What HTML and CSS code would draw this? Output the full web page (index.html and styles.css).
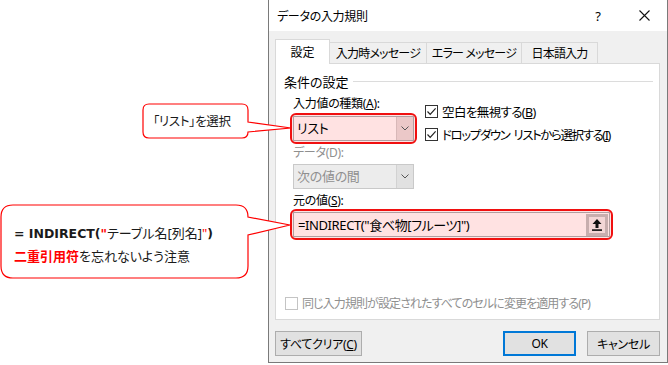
FILE: index.html
```html
<!DOCTYPE html>
<html lang="ja">
<head>
    <meta charset="UTF-8">
    <title>データの入力規則</title>
    <link rel="stylesheet" href="styles.css">
</head>
<body>
<div class="page">
    <div class="canvas"></div>

    <div class="dialog">
        <div class="titlebar">
            <span class="title">データの入力規則</span>
            <span class="tb-btn">?</span>
            <span class="tb-btn">
                <svg width="11" height="11" viewBox="0 0 11 11"><path d="M0.5 0.5 L10.5 10.5 M10.5 0.5 L0.5 10.5" stroke="#111" stroke-width="1.1" fill="none"/></svg>
            </span>
        </div>

        <div class="dlg-body">
            <div class="tabs">
                <div class="tab active" style="width:55px">設定</div>
                <div class="tab" style="width:97px">入力時メッセージ</div>
                <div class="tab" style="width:95px">エラー メッセージ</div>
                <div class="tab" style="width:76px">日本語入力</div>
            </div>

            <div class="panel">
                <div class="legend">
                    <span>条件の設定</span>
                    <span class="legend-line"></span>
                </div>

                <div class="settings">
                    <div class="col-left">
                        <div class="label">入力値の種類(<u>A</u>):</div>
                        <div class="mark">
                            <div class="combo pink">
                                <span class="combo-text">リスト</span>
                                <span class="combo-btn"><svg width="8" height="5" viewBox="0 0 8 5"><path d="M0.5 0.5 L4 4 L7.5 0.5" stroke="#555" fill="none"/></svg></span>
                            </div>
                        </div>
                        <div class="label disabled">データ(D):</div>
                        <div class="combo off">
                            <span class="combo-text">次の値の間</span>
                            <span class="combo-btn"><svg width="8" height="5" viewBox="0 0 8 5"><path d="M0.5 0.5 L4 4 L7.5 0.5" stroke="#555" fill="none"/></svg></span>
                        </div>
                    </div>
                    <div class="col-right">
                        <label class="check first">
                            <span class="box"><svg width="11" height="11" viewBox="0 0 11 11"><path d="M1.5 5.5 L4.2 8.3 L9.6 2.4" stroke="#222" stroke-width="1.2" fill="none"/></svg></span>
                            <span>空白を無視する(<u>B</u>)</span>
                        </label>
                        <label class="check narrow">
                            <span class="box"><svg width="11" height="11" viewBox="0 0 11 11"><path d="M1.5 5.5 L4.2 8.3 L9.6 2.4" stroke="#222" stroke-width="1.2" fill="none"/></svg></span>
                            <span><span class="word">ドロップダウン</span>リストから選択する(<u>I</u>)</span>
                        </label>
                    </div>
                </div>

                <div class="label src-label">元の値(<u>S</u>):</div>
                <div class="mark wide">
                    <div class="textbox">
                        <span class="tb-text">=INDIRECT("食べ物[フルーツ]")</span>
                        <span class="pick">
                            <svg width="10" height="12" viewBox="0 0 10 12"><path d="M5 0 L9.5 5 H6.5 V9 H3.5 V5 H0.5 Z" fill="#111"/><rect x="0" y="10.3" width="10" height="1.6" fill="#111"/></svg>
                        </span>
                    </div>
                </div>

                <label class="check apply">
                    <span class="box off"></span>
                    <span>同じ入力規則が設定されたすべてのセルに変更を適用する(P)</span>
                </label>
            </div>

            <div class="buttons">
                <button class="btn clear">すべてクリア(<u>C</u>)</button>
                <span class="spacer"></span>
                <button class="btn primary">OK</button>
                <button class="btn">キャンセル</button>
            </div>
        </div>
    </div>

    <!-- annotation balloons lie over the page -->
    <svg class="callouts" width="668" height="365" viewBox="0 0 668 365">
        <path d="M149,104 H242 Q248,104 248,110 V122 L291,128 L248,132 Q248,138 242,138 H149 Q143,138 143,132 V110 Q143,104 149,104 Z" fill="#fff" stroke="#f00" stroke-width="1.2"/>
        <path d="M13,205 H236 Q248,205 248,217 L290,225 L248,235 V266 Q248,278 236,278 H13 Q1,278 1,266 V217 Q1,205 13,205 Z" fill="#fff" stroke="#f00" stroke-width="1.2"/>
    </svg>
    <div class="note note-list">「リスト」を選択</div>
    <div class="note note-formula">
        <div class="formula"><b>= INDIRECT(</b><b class="red">"</b>テーブル名[列名]<span class="red">"</span><b>)</b></div>
        <div class="warn"><b class="red">二重引用符</b>を忘れないよう注意</div>
    </div>
</div>
</body>
</html>
```

FILE: styles.css
```css
body {
    margin: 0;
    background-color: #fff;
    font-family: "Noto Sans", "Noto Sans CJK JP", sans-serif;
    font-feature-settings: "palt" 1;
    color: #000;
    overflow: hidden;
}

.page {
    position: relative;
    display: flex;
    width: 668px;
    height: 365px;
}

.canvas {
    width: 268px;
    flex: none;
}

.dialog {
    width: 398px;
    height: 362px;
    border: 1px solid #7a7a7a;
    border-top: none;
    background-color: #f0f0f0;
    display: flex;
    flex-direction: column;
    font-size: 12px;
    letter-spacing: -0.3px;
}

.titlebar {
    height: 31px;
    background-color: #fff;
    display: flex;
    align-items: center;
    padding-left: 8px;
}

.title {
    flex: 1;
}

.tb-btn {
    width: 46px;
    height: 31px;
    display: flex;
    align-items: center;
    justify-content: center;
    font-size: 13px;
}

.dlg-body {
    flex: 1;
    display: flex;
    flex-direction: column;
    padding: 8px 7px 0 6px;
}

.tabs {
    display: flex;
    align-items: flex-end;
    height: 24px;
    position: relative;
    z-index: 1;
    letter-spacing: -0.8px;
}

.tab {
    box-sizing: border-box;
    height: 21px;
    border: 1px solid #d9d9d9;
    border-left: none;
    border-bottom: none;
    background-color: #f0f0f0;
    display: flex;
    align-items: center;
    justify-content: center;
}

.tab.active {
    height: 25px;
    border-left: 1px solid #d9d9d9;
    background-color: #fff;
    margin-bottom: -1px;
    letter-spacing: 0;
}

.panel {
    box-sizing: border-box;
    width: 385px;
    height: 257px;
    background-color: #fff;
    border: 1px solid #d9d9d9;
    display: flex;
    flex-direction: column;
    padding: 9px 6px 8px 0;
}

.legend {
    display: flex;
    align-items: center;
    height: 16px;
    padding-left: 8px;
    font-size: 13px;
    letter-spacing: 0;
}

.legend-line {
    flex: 1;
    height: 1px;
    background-color: #dcdcdc;
    margin-left: 4px;
    margin-top: 1px;
}

.label {
    height: 16px;
    line-height: 16px;
    padding-left: 17px;
}

.label.disabled {
    color: #8f8f8f;
}

.settings {
    display: grid;
    grid-template-columns: 141px 1fr;
    column-gap: 8px;
    margin-top: 7px;
}

.mark {
    margin: 1px 0 0 14px;
    border: 2px solid #f01010;
    border-radius: 6px;
    padding: 1px;
    background-color: #fde4e4;
    width: 121px;
}

.mark.wide {
    width: 317px;
    margin-top: 0;
}

.combo {
    box-sizing: border-box;
    height: 25px;
    display: flex;
    border: 1px solid #b09ea0;
    background-color: #ffe2e2;
}

.combo-text {
    flex: 1;
    padding-left: 3px;
    line-height: 23px;
    font-size: 13px;
}

.combo-btn {
    width: 16px;
    border-left: 1px solid #d8b8b8;
    background-color: #ebc8c8;
    display: flex;
    align-items: center;
    justify-content: center;
}

.combo.off {
    width: 121px;
    margin: 3px 0 0 17px;
    border-color: #c9c9c9;
    background-color: #ececec;
}

.combo.off .combo-text {
    color: #8f8f8f;
}

.combo.off .combo-btn {
    border-left-color: #d2d2d2;
    background-color: #e1e1e1;
}

.col-left .label.disabled {
    margin-top: 1px;
}

.col-right {
    padding-top: 7px;
}

.check {
    display: flex;
    align-items: center;
    height: 16px;
    gap: 4px;
    font-size: 12.5px;
    letter-spacing: -0.6px;
}

.check.first {
    margin-bottom: 7px;
}

.check.narrow {
    letter-spacing: -1.4px;
}

.word {
    margin-right: 4px;
}

.box {
    box-sizing: border-box;
    flex: none;
    width: 13px;
    height: 13px;
    border: 1px solid #333;
    background-color: #fff;
    display: flex;
    align-items: center;
    justify-content: center;
}

.box.off {
    border-color: #c4c4c4;
}

.src-label {
    margin-top: 4px;
}

.textbox {
    box-sizing: border-box;
    height: 25px;
    display: flex;
    align-items: center;
    border: 1px solid #b09ea0;
    background-color: #ffe2e2;
    padding-right: 1px;
}

.tb-text {
    flex: 1;
    padding-left: 4px;
    font-size: 13px;
    letter-spacing: -0.4px;
}

.pick {
    box-sizing: border-box;
    width: 22px;
    height: 22px;
    border: 3px solid #c8aeae;
    background-color: #f3d6d6;
    display: flex;
    align-items: center;
    justify-content: center;
}

.check.apply {
    margin-top: auto;
    padding-left: 9px;
    color: #8f8f8f;
    font-size: 12px;
    letter-spacing: -0.9px;
}

.buttons {
    display: flex;
    gap: 11px;
    margin-top: 11px;
}

.spacer {
    flex: 1;
}

.btn {
    box-sizing: border-box;
    height: 25px;
    width: 73px;
    border: 1px solid #adadad;
    background-color: #e1e1e1;
    font-family: inherit;
    font-feature-settings: inherit;
    font-size: 12px;
    letter-spacing: -0.3px;
    padding: 0;
    color: #000;
}

.btn.clear {
    width: 87px;
}

.btn.primary {
    border: 2px solid #0078d7;
}

.callouts {
    position: absolute;
    left: 0;
    top: 0;
    pointer-events: none;
}

.note {
    position: absolute;
    color: #1a1a1a;
}

.note-list {
    left: 153px;
    top: 113px;
    font-size: 12.5px;
    line-height: 18px;
    letter-spacing: -0.3px;
}

.note-formula {
    left: 14px;
    top: 222px;
    font-size: 13px;
    line-height: 22px;
}

.formula b {
    font-family: "DejaVu Sans", "Noto Sans CJK JP", sans-serif;
    font-size: 12.5px;
}

.red {
    color: #ff0000;
}
```
